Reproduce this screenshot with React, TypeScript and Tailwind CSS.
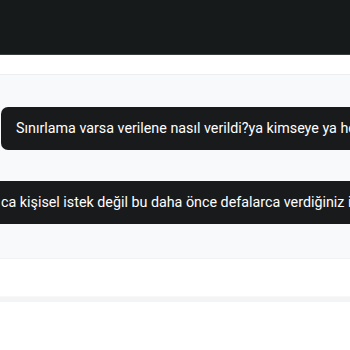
export default function App() {
  return (
    <div className="w-[350px] h-[350px] overflow-hidden bg-white font-['Roboto',sans-serif]">
      <header className="h-[55px] bg-[#161a1b] border-b border-[#3a3d3f]" />
      <div className="h-[20px] bg-white border-b border-[#eceef0]" />
      <section className="bg-[#f8f9fb] h-[183px] pt-[32px] flex flex-col gap-[31px] overflow-hidden">
        <div className="ml-px h-[43px] w-[420px] shrink-0 rounded-[7px] bg-[#181a1c] pl-[15px] flex items-center text-white text-[14.3px] whitespace-nowrap">
          Sınırlama varsa verilene nasıl verildi?ya kimseye ya hep herkese
        </div>
        <div className="h-[43px] w-[420px] shrink-0 bg-[#181a1c] pl-px flex items-center text-white text-[14.3px] whitespace-nowrap">
          ca kişisel istek değil bu daha önce defalarca verdiğiniz indirim
        </div>
      </section>
      <div className="h-[38px] bg-white border-t border-[#f1f2f4]" />
      <div className="h-[6px] bg-[#f3f4f6] border-t border-[#f8f8f9]" />
      <div className="bg-white h-[48px]" />
    </div>
  );
}
